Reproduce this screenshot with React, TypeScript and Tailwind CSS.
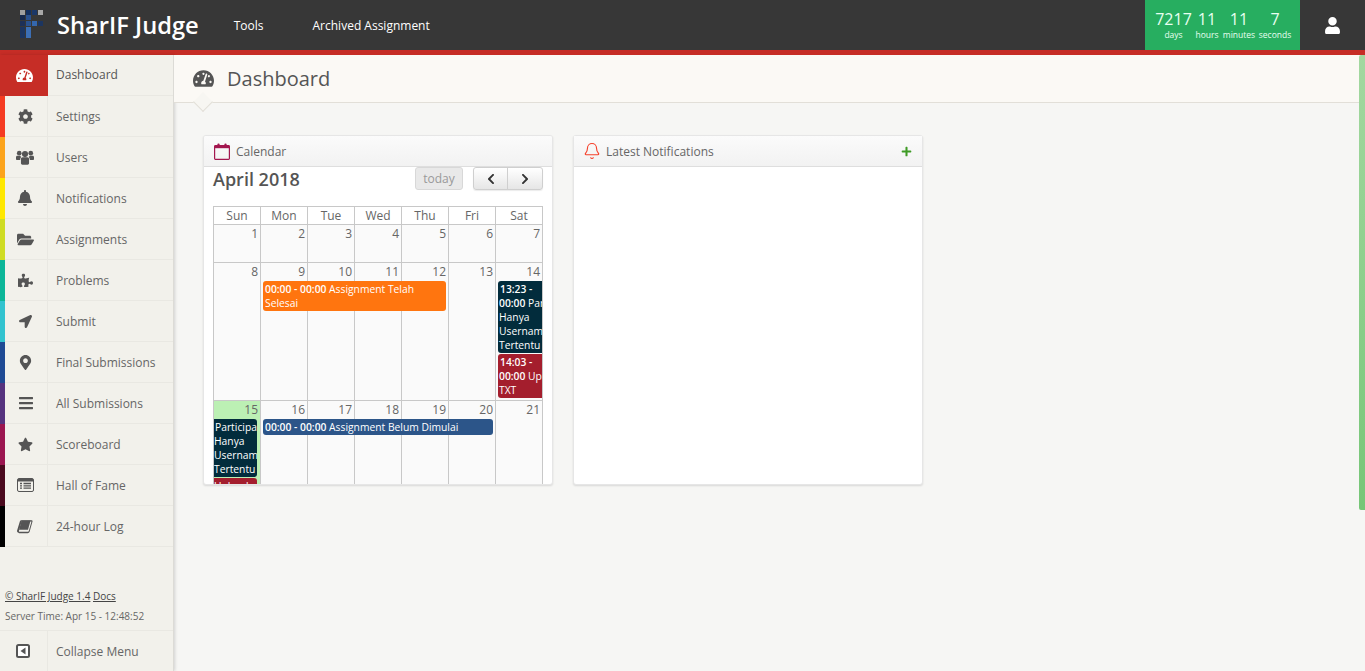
import React from "react";
import {
  FaTachometerAlt, FaCog, FaBell, FaFolderOpen, FaPuzzlePiece, FaLocationArrow,
  FaMapMarkerAlt, FaBars, FaStar, FaUser, FaPlus, FaChevronLeft, FaChevronRight,
} from "react-icons/fa";
import { Bell } from "lucide-react";

type IconT = React.ComponentType<{ className?: string }>;

const UsersIcon: IconT = ({ className }) => (
  <svg viewBox="0 0 20 16" width="18" height="15" fill="currentColor" className={className}>
    <circle cx="10" cy="4.2" r="3.4" />
    <circle cx="3.6" cy="3.2" r="2.6" />
    <circle cx="16.4" cy="3.2" r="2.6" />
    <path d="M5.5 9.5c0-1 .9-1.8 1.9-1.8h5.2c1 0 1.9.8 1.9 1.8v5c0 .9-.7 1.5-1.6 1.5H7.1c-.9 0-1.6-.6-1.6-1.5z" />
    <path d="M4.6 10.8H1.2C.5 10.8 0 10.3 0 9.6V7.7c0-.9.7-1.6 1.6-1.6h3.1c.3.6.7 1 1.2 1.4-.8.6-1.3 1.9-1.3 3.3zM15.4 10.8h3.4c.7 0 1.2-.5 1.2-1.2V7.7c0-.9-.7-1.6-1.6-1.6h-3.1c-.3.6-.7 1-1.2 1.4.8.6 1.3 1.9 1.3 3.3z" />
  </svg>
);

const ListAlt: IconT = ({ className }) => (
  <svg viewBox="0 0 17 14" width="17" height="14" className={className}>
    <rect x="0.5" y="0.5" width="16" height="13" rx="1.5" fill="none" stroke="currentColor" />
    <rect x="1" y="1" width="15" height="2.5" fill="currentColor" />
    <path d="M3 5.5h2M6.5 5.5h7.5M3 7.8h2M6.5 7.8h7.5M3 10.1h2M6.5 10.1h7.5" stroke="currentColor" strokeWidth="1.3" />
  </svg>
);

const SlantBook: IconT = ({ className }) => (
  <svg viewBox="0 0 16 15" width="16" height="15" fill="currentColor" className={className}>
    <path d="M4.2 0.3h10.3c.8 0 1.2.6 1 1.3l-2.9 10.2c-.3.9-1 1.4-1.9 1.4H2.4c-.9 0-1.3-.5-1-1.1h9c.7 0 1.1-.3 1.4-1l2.6-9.3-.1-.2H4.6L2 10.8c-.2.8.2 1 .8 1h9.1l-.3 1.1H2.2C.6 12.9-.3 11.7.1 10.4L2.9 1.3C3.1.7 3.6.3 4.2.3z" transform="translate(0 1)" />
    <path d="M4.6 1.5h9L11 10.8H2.1z" />
  </svg>
);

const CalOutline: IconT = ({ className }) => (
  <svg viewBox="0 0 16 17" width="16" height="17" className={className}>
    <rect x="0.6" y="2.6" width="14.8" height="13.8" rx="0.8" fill="none" stroke="currentColor" strokeWidth="1.2" />
    <rect x="1" y="3" width="14" height="2.2" fill="currentColor" />
    <rect x="3.4" y="0.5" width="2.2" height="4" rx="1" fill="currentColor" />
    <rect x="10.4" y="0.5" width="2.2" height="4" rx="1" fill="currentColor" />
  </svg>
);

const CollapseIcon: IconT = ({ className }) => (
  <svg viewBox="0 0 14 14" width="14" height="14" className={className}>
    <rect x="1" y="1" width="12" height="12" rx="1.5" fill="#fff" stroke="currentColor" strokeWidth="2" />
    <path d="M9.5 3.5v7L4.5 7z" fill="currentColor" />
  </svg>
);

const items: [string, string, IconT, string][] = [
  ["Settings", "bg-[#f53b22]", FaCog, "text-[15px] -ml-[2px]"],
  ["Users", "bg-[#fca41c]", UsersIcon, "-ml-[2px]"],
  ["Notifications", "bg-[#ffe800]", FaBell, "text-[16px] -ml-[2px]"],
  ["Assignments", "bg-[#cfdc24]", FaFolderOpen, "text-[17px] -ml-[2px]"],
  ["Problems", "bg-[#0cb698]", FaPuzzlePiece, "text-[15px] -ml-[2px]"],
  ["Submit", "bg-[#32c3cf]", FaLocationArrow, "text-[13px] -ml-[2px]"],
  ["Final Submissions", "bg-[#1f4a94]", FaMapMarkerAlt, "text-[15px] -ml-[2px]"],
  ["All Submissions", "bg-[#56337f]", FaBars, "text-[16px] -ml-[1px]"],
  ["Scoreboard", "bg-[#9b1650]", FaStar, "text-[15px] -ml-[2px]"],
  ["Hall of Fame", "bg-[#4a0a1e]", ListAlt, "-ml-[2px]"],
  ["24-hour Log", "bg-black", SlantBook, "-ml-[2px]"],
];

function Logo() {
  return (
    <svg width="24" height="28" viewBox="0 0 24 28" className="shrink-0 mb-[2px]">
      <rect x="0" y="0" width="5" height="5" fill="#a0a0a0" />
      <rect x="6" y="0" width="5" height="5" fill="#14305f" />
      <rect x="12" y="0" width="5" height="5" fill="#1a3768" />
      <rect x="18" y="0" width="5" height="5" fill="#a8a8a8" />
      <rect x="0" y="5" width="5" height="5" fill="#172a4e" />
      <rect x="6" y="5" width="5" height="5" fill="#2a5290" />
      <rect x="0" y="11" width="5" height="5" fill="#1d3058" />
      <rect x="6" y="11" width="5" height="5" fill="#2a5290" />
      <rect x="12" y="11" width="5" height="5" fill="#3467ae" />
      <rect x="18" y="11" width="5" height="5" fill="#1c3560" />
      <rect x="0" y="17" width="5" height="11" fill="#1c3560" />
      <rect x="6" y="17" width="5" height="11" fill="#3c6fb5" />
    </svg>
  );
}

function Count({ n, l, w }: { n: string; l: string; w: string }) {
  return (
    <div className={`flex flex-col items-center ${w}`}>
      <span className="text-[16px] leading-[20px] pt-[1px]">{n}</span>
      <span className="text-[8.5px] leading-[11px] whitespace-nowrap">{l}</span>
    </div>
  );
}

function Header() {
  return (
    <header className="h-[55px] shrink-0 bg-[#373737] border-b-[5px] border-[#c62d26] flex items-center text-white">
      <div className="pl-5 flex items-center">
        <Logo />
        <span className="ml-[13px] text-[23.7px] font-semibold leading-[32px]">SharIF Judge</span>
      </div>
      <span className="ml-[35px] text-[12px] pt-[1px]">Tools</span>
      <span className="ml-[49px] text-[12px] pt-[1px]">Archived Assignment</span>
      <div className="ml-auto h-[50px] w-[155px] bg-[#27ae60] flex items-start pl-[10px] pt-[8px] text-[#e8fff0]">
        <Count n="7217" l="days" w="w-[37px]" />
        <Count n="11" l="hours" w="w-[30px]" />
        <Count n="11" l="minutes" w="w-[32px] ml-[1px]" />
        <Count n="7" l="seconds" w="w-[32px] ml-[4px]" />
      </div>
      <div className="w-[65px] flex justify-center">
        <FaUser className="text-[17px]" />
      </div>
    </header>
  );
}

function Sidebar() {
  return (
    <aside className="w-[174px] shrink-0 bg-[#f2f1eb] border-r border-[#dcdbd6] shadow-[1px_0_3px_rgba(0,0,0,0.15)] flex flex-col text-[#666] text-[12px]">
      <div className="h-[41px] flex">
        <div className="w-[48px] bg-[#c62d26] flex items-center justify-center text-white">
          <FaTachometerAlt className="text-[17px]" />
        </div>
        <div className="flex-1 flex items-center pl-[8px] font-medium text-[#555] border-b border-[#e9e8e2]">Dashboard</div>
      </div>
      {items.map(([label, color, Icon, iconCls]) => (
        <div key={label} className="h-[41px] flex">
          <div className={`w-[5px] ${color}`} />
          <div className="w-[43px] border-r border-b border-[#e9e8e2] flex items-center justify-center text-[#555]">
            <Icon className={iconCls} />
          </div>
          <div className="flex-1 flex items-center pl-[8px] pt-[2px] border-b border-[#e9e8e2]">{label}</div>
        </div>
      ))}
      <div className="mt-auto">
        <div className="pl-[5px] text-[10px] text-[#444] leading-[14px]">
          <span className="underline">© SharIF Judge 1.4</span> <span className="underline">Docs</span>
        </div>
        <div className="pl-[5px] pt-[6px] pb-[7px] text-[10px] leading-[14px] text-[#666]">Server Time: Apr 15 - 12:48:52</div>
        <div className="h-[41px] flex border-t border-[#e9e8e2]">
          <div className="w-[48px] border-r border-[#e9e8e2] flex items-center justify-center text-[#555]">
            <CollapseIcon className="-ml-[2px]" />
          </div>
          <div className="flex items-center pl-[8px] pt-[2px]">Collapse Menu</div>
        </div>
      </div>
    </aside>
  );
}

const evText = "text-white text-[10.3px] leading-[14px] overflow-hidden";

function Week({ days, today }: { days: number[]; today?: boolean }) {
  return (
    <div className="grid grid-cols-7 absolute inset-0">
      {days.map((d, i) => (
        <div key={d} className={`border-r border-b border-[#c8c8c8] ${today && i === 0 ? "bg-[#bcf0b4]" : ""}`} />
      ))}
    </div>
  );
}

function Nums({ days }: { days: number[] }) {
  return (
    <>
      {days.map((d) => (
        <div key={d} className="text-right pr-[3px] text-[12px] leading-[18px] text-[#666]">{d}</div>
      ))}
    </>
  );
}

function Calendar() {
  const heads = ["Sun", "Mon", "Tue", "Wed", "Thu", "Fri", "Sat"];
  return (
    <div className="w-[350px] h-[350px] bg-white rounded-[3px] border border-[#e6e6e6] shadow-[0_1px_2px_rgba(0,0,0,0.12)] overflow-hidden flex flex-col">
      <div className="h-[31px] shrink-0 bg-linear-to-b from-[#fbfbfb] to-[#f2f2f2] border-b border-[#dedede] flex items-center pl-[10px] text-[12px] text-[#666]">
        <CalOutline className="text-[#a3174f]" />
        <span className="ml-[6px] pt-[2px]">Calendar</span>
      </div>
      <div className="px-[9px] flex-1 overflow-hidden">
        <div className="flex items-start h-[39px]">
          <span className="text-[18px] font-semibold text-[#555] leading-[24px]">April 2018</span>
          <div className="ml-auto w-[48px] h-[23px] pt-[1px] rounded-[3px] border border-[#d8d8d8] bg-[#e9e9e9] text-[12px] text-[#999] flex items-center justify-center">today</div>
          <div className="ml-[10px] w-[70px] h-[23px] rounded-[3px] border border-[#cfcfcf] bg-linear-to-b from-[#ffffff] to-[#e6e6e6] flex text-[#333] shadow-[0_1px_1px_rgba(0,0,0,0.08)]">
            <div className="w-[34px] border-r border-[#cfcfcf] flex items-center justify-center"><FaChevronLeft className="text-[12px]" /></div>
            <div className="flex-1 flex items-center justify-center"><FaChevronRight className="text-[12px]" /></div>
          </div>
        </div>
        <div className="border-l border-t border-[#c8c8c8] w-[330px]">
          <div className="grid grid-cols-7 h-[18px]">
            {heads.map((h) => (
              <div key={h} className="border-r border-b border-[#c8c8c8] text-center text-[12px] leading-[17px] text-[#666]">{h}</div>
            ))}
          </div>
          <div className="relative h-[38px] bg-[#fafafa]">
            <Week days={[1, 2, 3, 4, 5, 6, 7]} />
            <div className="relative grid grid-cols-7"><Nums days={[1, 2, 3, 4, 5, 6, 7]} /></div>
          </div>
          <div className="relative h-[138px] bg-[#fafafa]">
            <Week days={[8, 9, 10, 11, 12, 13, 14]} />
            <div className="relative grid grid-cols-7">
              <Nums days={[8, 9, 10, 11, 12, 13, 14]} />
              <div className={`col-start-2 col-span-4 row-start-2 ml-[2px] mr-[3px] h-[30px] bg-[#ff750f] rounded-[3px] pl-[2px] pt-[1px] ${evText}`}>
                <b className="font-semibold">00:00 - 00:00</b> Assignment Telah Selesai
              </div>
              <div className="col-start-7 row-start-2 ml-[2px] mr-[1px] overflow-hidden">
                <div className={`bg-[#022c3c] rounded-l-[3px] pl-[1px] pt-[1px] h-[72px] whitespace-nowrap mb-[1px] ${evText}`}>
                  <b className="font-semibold pl-[1px]">13:23 -</b><br /><b className="font-semibold">00:00</b> Participan<br />Hanya<br />Username<br />Tertentu
                </div>
                <div className={`bg-[#a41e2d] rounded-l-[3px] pl-[1px] pt-[1px] h-[44px] whitespace-nowrap ${evText}`}>
                  <b className="font-semibold pl-[1px]">14:03 -</b><br /><b className="font-semibold">00:00</b> Upload<br />TXT
                </div>
              </div>
            </div>
          </div>
          <div className="relative h-[90px] bg-[#fafafa]">
            <Week days={[15, 16, 17, 18, 19, 20, 21]} today />
            <div className="relative grid grid-cols-7">
              <Nums days={[15, 16, 17, 18, 19, 20, 21]} />
              <div className="col-start-1 row-start-2 overflow-hidden mr-[4px]">
                <div className={`bg-[#022c3c] rounded-r-[3px] pt-[1px] h-[58px] whitespace-nowrap mb-[1px] ${evText}`}>
                  <span className="pl-[1px]">Participan</span><br />Hanya<br />Username<br />Tertentu
                </div>
                <div className={`bg-[#a41e2d] rounded-r-[3px] pt-[1px] h-[14px] whitespace-nowrap ${evText}`}>Upload</div>
              </div>
              <div className={`col-start-2 col-span-5 row-start-2 ml-[2px] mr-[3px] h-[16px] self-start bg-[#2c5589] rounded-[3px] pl-[2px] pt-[1px] ${evText}`}>
                <b className="font-semibold">00:00 - 00:00</b> Assignment Belum Dimulai
              </div>
            </div>
          </div>
        </div>
      </div>
    </div>
  );
}

function Notifications() {
  return (
    <div className="w-[350px] h-[350px] bg-white rounded-[3px] border border-[#e6e6e6] shadow-[0_1px_2px_rgba(0,0,0,0.12)] flex flex-col">
      <div className="h-[31px] shrink-0 bg-linear-to-b from-[#fbfbfb] to-[#f2f2f2] border-b border-[#dedede] flex items-center pl-[9px] pr-[10px] text-[12px] text-[#666]">
        <Bell size={18} strokeWidth={1.5} className="text-[#f5402a]" />
        <span className="ml-[5px] pt-[2px]">Latest Notifications</span>
        <FaPlus className="ml-auto text-[11px] text-[#3f9b26]" />
      </div>
    </div>
  );
}

export default function App() {
  return (
    <div className="h-[671px] w-[1365px] overflow-hidden flex flex-col bg-[#f6f6f4] [font-family:'Open_Sans',sans-serif]">
      <Header />
      <div className="flex flex-1 min-h-0">
        <Sidebar />
        <main className="flex-1 min-w-0 flex">
          <div className="flex-1 min-w-0">
            <div className="relative h-[48px] bg-[#fbf9f5] border-b border-[#e2dfd8] flex items-center pl-[19px] text-[#555]">
              <FaTachometerAlt className="text-[21px]" />
              <span className="ml-[13px] text-[20px]">Dashboard</span>
              <div className="absolute left-[22px] top-[40px] w-[14px] h-[14px] rotate-45 bg-[#f7f6f2] border-r border-b border-[#e2dfd8]" />
            </div>
            <div className="pl-[29px] pt-[32px] flex gap-[20px]">
              <Calendar />
              <Notifications />
            </div>
          </div>
          <div className="w-[6px] shrink-0">
            <div className="h-[455px] bg-linear-to-b from-[#a3d8a0] to-[#76c677] rounded-l-[2px]" />
          </div>
        </main>
      </div>
    </div>
  );
}
